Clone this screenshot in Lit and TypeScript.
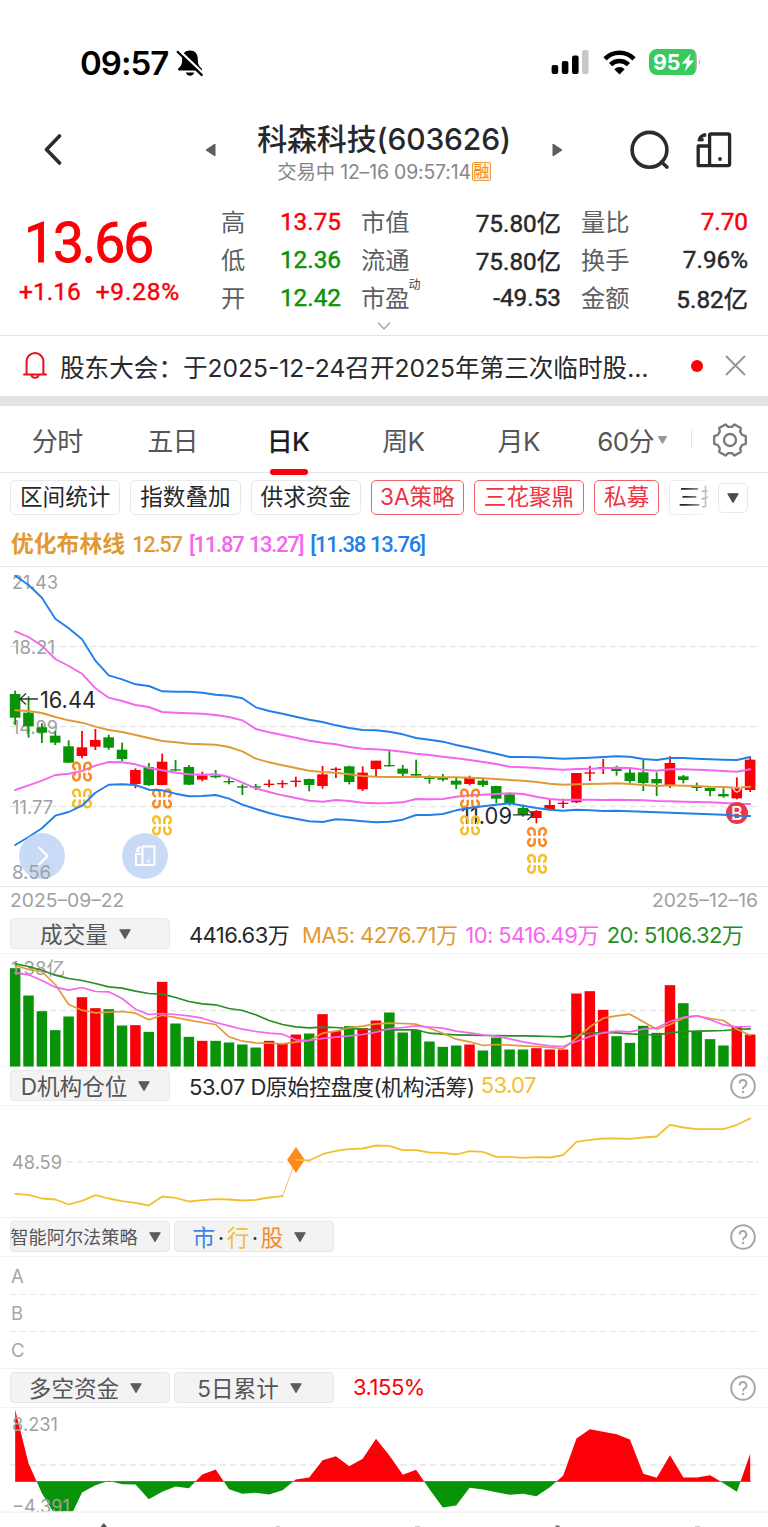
import { LitElement, html, svg, css } from "lit";
import { customElement } from "lit/decorators.js";

const X0 = 15.2;
const STEP = 13.364;
const x = (i: number) => X0 + i * STEP;

const RED = "#fb0007";
const GREEN = "#089308";

// Series are stored in thirds of a pixel, each pane with its own origin.
const third = (origin: number) => (v: number) => origin + v / 3;
const a = third(560);
const b = third(680);
const c = third(730);

const join = (p: number[], q: number[], r: number[]) => [...p.map(a), ...q.map(b), ...r.map(c)];

const upper2 = join(
  [47, 75, 113, 176, 205, 238, 302, 346, 358, 373, 378, 394, 395, 395, 398, 404, 407, 415, 442],
  [93, 101, 110, 119, 126, 136, 144, 150, 151, 155, 163, 174, 179, 185, 195, 203, 212, 221, 231],
  [81, 82, 84, 86, 85, 83, 81, 79, 80, 87, 90, 84, 84, 86, 88, 89, 90, 81]);
const upper1 = join(
  [214, 231, 257, 297, 318, 341, 385, 413, 423, 435, 441, 456, 458, 460, 461, 465, 471, 481, 507],
  [157, 165, 173, 182, 188, 193, 201, 206, 208, 211, 215, 221, 225, 230, 235, 240, 246, 252, 260],
  [112, 114, 117, 119, 117, 116, 115, 113, 114, 119, 122, 118, 118, 119, 121, 123, 125, 118]);
const middle = join(
  [451, 453, 459, 471, 481, 488, 500, 510, 516, 525, 534, 543, 547, 551, 553, 554, 561, 574, 596],
  [247, 256, 264, 272, 276, 278, 283, 288, 290, 291, 291, 290, 291, 292, 292, 293, 295, 297, 300],
  [152, 156, 161, 164, 163, 162, 161, 160, 162, 165, 168, 166, 167, 168, 170, 171, 173, 170]);
const lower1 = join(
  [690, 676, 662, 645, 641, 633, 617, 606, 607, 613, 624, 631, 638, 643, 644, 643, 651, 668, 685],
  [336, 346, 354, 362, 365, 360, 363, 368, 370, 369, 367, 357, 358, 357, 350, 346, 344, 342, 340],
  [192, 200, 207, 210, 209, 209, 210, 209, 210, 211, 213, 214, 215, 216, 217, 219, 221, 222]);
const lower2 = join(
  [855, 831, 805, 767, 756, 737, 698, 674, 673, 675, 689, 691, 701, 709, 708, 705, 716, 734, 747],
  [399, 409, 416, 424, 426, 418, 420, 424, 427, 425, 419, 405, 405, 402, 391, 384, 379, 374, 370],
  [227, 234, 239, 242, 239, 241, 243, 242, 244, 245, 247, 248, 250, 251, 253, 254, 257, 258]);

// [rising, high, body top, body bottom, low]
type Candle = [number, number, number, number, number];
const shift = (f: (v: number) => number) => (k: number[]): Candle => [k[0], f(k[1]), f(k[2]), f(k[3]), f(k[4])];
const candles: Candle[] = [
  ...[
    [0, 392, 402, 473, 495], [0, 409, 458, 499, 533], [0, 490, 502, 518, 549], [0, 513, 527, 548, 555],
    [0, 541, 559, 608, 609], [1, 513, 562, 588, 595], [1, 507, 540, 560, 570], [0, 524, 532, 563, 569],
    [0, 548, 569, 597, 603], [1, 625, 630, 672, 685], [0, 609, 621, 675, 678], [1, 581, 605, 675, 676],
    [0, 600, 628, 632, 634], [0, 615, 621, 674, 675], [1, 635, 646, 659, 664], [0, 630, 647, 652, 655],
    [0, 655, 663, 667, 673], [0, 673, 679, 683, 705], [0, 672, 679, 683, 690],
  ].map(shift(a)),
  ...[
    [1, 299, 311, 315, 322], [1, 301, 309, 313, 324], [1, 290, 302, 306, 321], [0, 296, 297, 315, 334],
    [1, 258, 283, 318, 326], [1, 262, 266, 270, 294], [0, 257, 259, 306, 313], [1, 259, 278, 328, 333],
    [1, 242, 242, 267, 288], [0, 213, 255, 259, 260], [0, 255, 266, 281, 293], [0, 239, 282, 287, 295],
    [0, 286, 292, 297, 311], [0, 282, 294, 299, 304], [0, 292, 302, 314, 327], [1, 287, 294, 312, 316],
    [0, 293, 302, 315, 321], [0, 317, 318, 356, 370], [0, 340, 343, 369, 377],
  ].map(shift(b)),
  ...[
    [0, 224, 234, 255, 260], [1, 240, 243, 264, 280], [1, 208, 225, 240, 243], [1, 206, 218, 222, 234],
    [1, 129, 129, 217, 219], [1, 108, 127, 131, 153], [1, 87, 111, 115, 132], [0, 107, 116, 123, 137],
    [0, 117, 128, 153, 158], [0, 90, 127, 159, 183], [0, 127, 147, 160, 198], [1, 79, 99, 166, 174],
    [0, 135, 139, 150, 160], [0, 158, 170, 174, 183], [0, 173, 174, 183, 199], [0, 175, 192, 199, 203],
    [1, 142, 174, 205, 208], [1, 81, 89, 180, 186],
  ].map(shift(c)),
];

const v = third(885);
const volume = [
  248, 330, 377, 434, 393, 335, 368, 371, 420, 419, 439, 289, 414, 454, 466, 466, 471, 477, 486, 466, 475, 447, 444,
  386, 437, 422, 428, 405, 381, 441, 434, 468, 484, 480, 477, 495, 456, 492, 492, 488, 492, 492, 324, 317, 373, 452,
  472, 421, 442, 299, 353, 437, 461, 480, 424, 447].map(v);
const ma20 = [
  235, 243, 254, 269, 279, 285, 294, 304, 308, 317, 324, 326, 336, 348, 355, 358, 369, 375, 388, 405, 417, 424, 427,
  425, 426, 429, 431, 433, 434, 433, 433, 443, 446, 448, 449, 450, 450, 451, 451, 452, 453, 454, 448, 443, 441, 442,
  445, 447, 448, 442, 438, 437, 436, 435, 432, 430].map(v);
const ma5 = [
  240, 252, 258, 297, 357, 374, 382, 380, 378, 383, 403, 389, 396, 404, 411, 417, 454, 467, 472, 473, 475, 470, 465,
  443, 437, 427, 422, 415, 413, 414, 416, 428, 443, 461, 469, 480, 477, 479, 481, 483, 486, 489, 458, 424, 398, 391,
  386, 409, 431, 417, 398, 391, 399, 405, 431, 449].map(v);
const ma10 = [
  262, 268, 285, 305, 314, 306, 318, 319, 339, 371, 387, 384, 387, 391, 398, 411, 421, 431, 438, 443, 446, 463, 465,
  459, 455, 451, 447, 440, 430, 426, 421, 425, 428, 437, 442, 448, 452, 460, 469, 476, 481, 483, 468, 453, 442, 437,
  439, 431, 427, 408, 395, 391, 403, 418, 424, 423].map(v);

const control = [
  280, 283, 294, 297, 312, 301, 284, 294, 302, 307, 315, 288, 292, 303, 299, 296, 297, 300, 298, 291, 287, 178, 180,
  161, 151, 146, 144, 135, 136, 149, 149, 156, 157, 162, 152, 154, 169, 169, 172, 170, 171, 164, 124, 118, 114, 114,
  115, 111, 108, 73, 81, 86, 86, 86, 73, 54].map(third(1100));

const funds = [
  118, 279, 368, 434, 450, 366, 344, 331, 341, 342, 386, 364, 348, 353, 312, 297, 356, 370, 367, 372, 359, 327, 321,
  269, 257, 287, 265, 205, 255, 313, 298, 356, 411, 405, 352, 357, 365, 373, 370, 377, 350, 316, 204, 176, 184, 191,
  207, 310, 322, 254, 321, 321, 314, 338, 364, 250].map(third(1370));

const points = (ys: number[], from = 0) => ys.map((y, i) => `${x(i + from).toFixed(1)},${y.toFixed(1)}`).join(" ");
const line = (ys: number[], color: string, from = 0, w = 1.9) =>
  svg`<polyline points=${points(ys, from)} fill="none" stroke=${color} stroke-width=${w} stroke-linejoin="round" stroke-linecap="round"/>`;
const dash = (y: number, x1 = 10) =>
  svg`<line x1=${x1} x2="758" y1=${y} y2=${y} stroke="#e6e6e6" stroke-width="1.3" stroke-dasharray="6 4"/>`;

// Each quarter is a hooked loop: the right-hand pair opens outward, the left-hand pair mirrors it.
const clover = (cx: number, cy: number, color: string) => svg`
  <g transform="translate(${cx} ${cy})" fill="none" stroke=${color} stroke-width="2.5">
    ${[[1, 1], [-1, 1], [1, -1], [-1, -1]].map(([sx, sy]) => svg`
      <path transform="scale(${sx} ${sy})" d="M2.300 1.200V5.300A3.300 3.500 0 1 0 6 1.900"/>`)}
  </g>`;

const deviceIcon = (cls: string) => html`
  <svg class=${cls} viewBox="0 0 36 36" fill="none" stroke="currentColor" stroke-width="3.300" stroke-linejoin="round">
    <rect x="13.6" y="2" width="20" height="31.6" rx="1.5"/>
    <path d="M13.6 14H2.2v19.6h11.4"/>
    <path d="M9.800 1.500C4.800 1.800 2.200 4.800 2 9h5.200V6.400H5.600C6.200 5 7.600 4.300 9.800 4.400Z" fill="currentColor" stroke-width=".8"/>
    <circle cx="24" cy="27" r="1.900" fill="currentColor" stroke="none"/>
  </svg>`;

const help = html`
  <svg class="help" viewBox="0 0 26 26" fill="none" stroke="#a6a6aa" stroke-width="2">
    <circle cx="13" cy="13" r="11.8"/>
    <path d="M9.6 10.4a3.4 3.4 0 1 1 5 3c-1.200.6-1.600 1.200-1.600 2.800" stroke-width="1.9"/>
    <circle cx="13" cy="19" r="1.2" fill="#a6a6aa" stroke="none"/>
  </svg>`;

@customElement("app-root")
export class AppRoot extends LitElement {
  static styles = css`
    :host { display: block; width: 768px; height: 1527px; overflow: hidden; background: #fff; color: #27282b;
      font-family: Inter, "Noto Sans CJK SC", sans-serif; white-space: nowrap; }
    * { box-sizing: border-box; }
    svg { display: block; flex: none; }
    .status { height: 100px; display: flex; align-items: center; padding: 25px 66px 0 80px; color: #000; }
    .clock { font-size: 33px; font-weight: 600; letter-spacing: -1px; width: 96px; }
    .grow { flex: 1; }
    .sys { display: flex; align-items: center; gap: 13.500px; }
    .nav { height: 100px; display: grid; grid-template-columns: 200px 20px 328px 20px 200px; align-items: center; }
    .back { padding-left: 43px; }
    .tri-l, .tri-r { justify-self: center; }
    .name { text-align: center; padding-top: 5px; }
    .stock { font-size: 30px; font-weight: 500; line-height: 38px; letter-spacing: -.15px; }
    .when { display: flex; justify-content: center; align-items: center; font-size: 19.400px; line-height: 28px; color: #85868a; letter-spacing: -.15px; }
    .rong { width: 19px; height: 19px; border: 1px solid #f49a3a; border-radius: 2px; background: #fef0df; color: #ee8a22;
      font-size: 16px; line-height: 16px; text-align: center; margin-left: 1px; letter-spacing: 0; }
    .tools { display: flex; align-items: center; gap: 26px; padding-left: 62px; }
    .dev { width: 36px; height: 36px; }
    .quote { height: 135.500px; display: flex; border-bottom: 1px solid #e6e6e8; font-family: Roboto, "Noto Sans CJK SC", sans-serif; }
    .last { width: 221px; color: #fb0007; }
    .price { font-size: 55px; line-height: 60px; -webkit-text-stroke: .9px currentColor; padding: 13px 0 0 24px; letter-spacing: -2px; }
    .chg { display: flex; gap: 15px; font-size: 24.500px; line-height: 30px; -webkit-text-stroke: .45px currentColor; padding: 4px 0 0 19px; }
    .pct { letter-spacing: .8px; }
    .mid { width: 527px; }
    .stats { display: grid; grid-template-columns: 120px 200px 167px; column-gap: 20px; grid-auto-rows: 38px; padding-top: 2px; }
    .cell { display: flex; justify-content: space-between; align-items: center; font-size: 24.300px; height: 37px; }
    .num { -webkit-text-stroke: .45px currentColor; padding-top: 1px; margin-bottom: -1px; }
    .lab { color: #5e5f63; font-size: 24.300px; margin-top: -1px; }
    sup { font-size: 12px; line-height: 12px; position: relative; top: -8px; left: -1px; color: #444; }
    .up { color: #fb0007; }
    .down { color: #089308; }
    .expand { margin: 5px 0 0 155px; }
    .notice { height: 60.500px; display: flex; align-items: center; padding-left: 23px; }
    .ntext { margin-left: 13px; width: 631px; font-size: 24.600px; }
    .dot { width: 12px; height: 12px; border-radius: 50%; background: #fb0007; }
    .close { margin-left: 22px; }
    .band { height: 9.500px; background: #e4e4e6; }
    .tabs { height: 67px; display: flex; border-bottom: 1px solid #e6e6e8; font-size: 26px; color: #55565a; }
    .tab { width: 115.4px; display: flex; align-items: center; justify-content: center; gap: 3px; padding: 2px 1px 0 0; position: relative; letter-spacing: -.6px; }
    .tab:nth-child(6) { padding-right: 4px; }
    .tab.on { color: #1d1e20; font-weight: 500; }
    .tab.on::after { content: ""; position: absolute; left: 39px; bottom: -3px; width: 38px; height: 6px; border-radius: 3px; background: #f5000f; }
    .gear { display: flex; align-items: center; margin-left: -1px; }
    .rule { width: 1px; height: 20px; background: #e6e6e8; margin-right: 20px; }
    .gear svg { margin-top: 2px; }
    .chips { height: 50px; display: flex; align-items: center; gap: 10px; padding: 0 0 0 10px; font-size: 22.600px; }
    .chip { flex: none; height: 35px; line-height: 32px; width: 110.3px; border: 1.4px solid #e9e9eb; border-radius: 5px; text-align: center; }
    .chip.hot { color: #ee3342; border-color: #f0616c; }
    .chip.w3a { width: 93px; }
    .chip.w2 { width: 65px; }
    .chip.cut { width: 39px; overflow: hidden; text-align: left; padding-left: 8px; border-right: 0; border-radius: 5px 0 0 5px;
      -webkit-mask-image: linear-gradient(90deg, #000 40%, transparent 115%); mask-image: linear-gradient(90deg, #000 40%, transparent 115%); }
    .more { height: 30px; width: 30px; border: 1.4px solid #e9e9eb; border-radius: 5px; display: grid; place-items: center; }
    .boll { height: 44.500px; display: flex; gap: 7px; padding-left: 11px; line-height: 43px; font-family: Roboto, "Noto Sans CJK SC", sans-serif;
      font-size: 22px; font-weight: 500; color: #e09a35; border-bottom: 1px solid #e9e9eb; letter-spacing: -1.250px; word-spacing: 1px; }
    .boll b { font-weight: 700; letter-spacing: 0; font-size: 22.800px; }
    .pink { color: #f566f0; }
    .blue { color: #1f80e8; }
    .green { color: #258f25; }
    .orange { color: #e09a35; }
    .gold { color: #f3bf2f; }
    .amber { color: #f5892a; }
    .sky { color: #3f7ff0; }
    .dates { height: 32px; display: flex; justify-content: space-between; padding: 1px 10px 0 10px; font-size: 19.300px; line-height: 25px; color: #a0a0a3; border-top: 1px solid #e9e9eb; }
    .bar { display: flex; align-items: center; height: 38.500px; padding: 0 12px 0 10px; border-bottom: 1.500px solid #f2f2f3; font-size: 22px; }
    .bar.first { height: 35.500px; padding-bottom: 3px; }
    .pick { flex: none; width: 160px; height: 31px; display: flex; align-items: center; justify-content: center; gap: 11px; background: #f3f3f4; border: 1px solid #e7e7e9;
      border-radius: 4px; color: #55565a; font-size: 22.600px; padding: 0 9px 1px 0; margin-right: 4px; }
    .pick.small { font-size: 18.200px; padding-right: 9px; }
    .pick svg { margin-top: 1px; }
    .sep { margin: 0 2.500px; color: #333; }
    .vals { margin: -1px 0 0 15px; letter-spacing: -.6px; }
    .vals.wide { letter-spacing: -.48px; }
    .vals + .vals { margin-left: 8px; }
    .vals + .vals.far { margin-left: 13px; }
    .vals.wide + .vals { margin-left: 6px; }
    .help { width: 26px; height: 26px; }
    .abc { height: 112.500px; display: grid; grid-template-rows: 1fr 1fr 1fr; padding: 0 10px; color: #a6a6a9; font-size: 18.500px; border-bottom: 1.500px solid #f2f2f3; }
    .abc div { display: flex; align-items: center; padding: 1px 0 0 1px; }
    .abc div + div { background: repeating-linear-gradient(90deg, #e6e6e6 0 6px, transparent 6px 10px) top / 100% 1px no-repeat; }
    text { font-family: Inter, "Noto Sans CJK SC", sans-serif; }
    .axis { font-size: 18.600px; fill: #a0a0a3; }
    .mark { font-size: 22.500px; fill: #27282b; }
  `;

  private arrow(color = "#5b5c60", w = 12, h = 10) {
    return html`<svg width=${w} height=${h} viewBox="0 0 11 9"><path d="M.8.6h9.400L5.500 8.600Z" fill=${color} stroke=${color} stroke-linejoin="round"/></svg>`;
  }

  private axis(text: string, y: number, w: number) {
    return svg`<text class="axis" x="12" y=${y} textLength=${w} lengthAdjust="spacingAndGlyphs">${text}</text>`;
  }

  private stat(name: string, value: string, tone = "", note = "") {
    return html`<div class="cell"><span class="lab">${name}${note ? html`<sup>${note}</sup>` : ""}</span><span class="num ${tone}">${value}</span></div>`;
  }

  private pricePane() {
    return html`<svg width="768" height="319" viewBox="0 567 768 319">
      ${dash(646.500)}${dash(726.500)}${dash(806.500)}
      ${this.axis("21.43", 588.500, 46)}${this.axis("18.21", 653.500, 43)}${this.axis("14.99", 733.500, 46)}${this.axis("11.77", 813.500, 41)}
      ${candles.map(([up, hi, top, bot, lo], i) => svg`
        <path d="M${x(i)} ${hi}V${lo}" stroke=${up ? RED : GREEN} stroke-width="1.800"/>
        <rect x=${x(i) - 5.400} y=${top} width="10.600" height=${Math.max(bot - top, 1.300)} fill=${up ? RED : GREEN}/>`)}
      ${line(upper2, "#1f80e8")}${line(upper1, "#f566f0")}${line(middle, "#e09a35")}${line(lower1, "#f566f0")}
      <path d="M20 699H38M26 693.500L20 699L26 704.500" fill="none" stroke="#333" stroke-width="1.300"/>
      <text class="mark" x="40" y="707.500" textLength="56" lengthAdjust="spacingAndGlyphs">16.44</text>
      <text class="mark" x="461" y="823.500" textLength="51" lengthAdjust="spacingAndGlyphs">11.09</text>
      <path d="M513 814.800H532M527.500 809.500L533 814.800L527.500 820" fill="none" stroke="#333" stroke-width="1.300"/>
      ${[[82, 771.500], [162, 798.500], [470, 798.500], [537, 837]].map(([cx, cy]) => svg`
        ${clover(cx, cy, "#f58a26")}${clover(cx, cy + 26.800, "#f3bf2f")}`)}
      <circle cx="737" cy="813" r="11" fill="#e9384a"/>
      <text x="737" y="819.500" text-anchor="middle" font-size="18" font-weight="500" fill="#fff">B</text>
      <path d="M734.500 786a3.400 3.400 0 1 0 5 0" fill="none" stroke="#fbd5d5" stroke-width="1.400"/>
      ${line(lower2, "#1f80e8")}
      <circle cx="42" cy="856" r="23" fill="#bfd3f6" fill-opacity=".85"/>
      <path d="M38.500 847l9 9-9 9" fill="none" stroke="#fff" stroke-width="2.300"/>
      <circle cx="145" cy="856" r="23" fill="#bfd3f6" fill-opacity=".85"/>
      <g fill="none" stroke="#fff" stroke-width="2" stroke-linejoin="round">
        <rect x="142.500" y="846.500" width="12" height="18.500"/>
        <path d="M142.500 854h-6.500v11h6.500M141 847.500c-2.500 0-4 1.500-4 3.500h2.500"/>
        <circle cx="148.500" cy="861.500" r=".4"/>
      </g>
      ${this.axis("8.56", 878.500, 39)}
    </svg>`;
  }

  private volumePane() {
    return html`<svg width="768" height="113.500" viewBox="0 953.500 768 113.500">
      ${dash(1010)}
      ${volume.map((y, i) => svg`<rect x=${x(i) - 5.300} y=${y} width="10.500" height=${1066.500 - y} fill=${candles[i][0] ? RED : GREEN}/>`)}
      <line x1="0" x2="768" y1="1066.500" y2="1066.500" stroke="#ececee"/>
      <text class="axis" x="11" y="974.500" textLength="54" lengthAdjust="spacingAndGlyphs">1.38亿</text>
      ${line(ma20, "#258f25", 0, 1.700)}${line(ma5, "#e09a35", 0, 1.700)}${line(ma10, "#f566f0", 0, 1.700)}
    </svg>`;
  }

  private controlPane() {
    return html`<svg width="768" height="112.500" viewBox="0 1105.500 768 112.500">
      ${dash(1161.500, 67)}
      ${this.axis("48.59", 1168.500, 50)}
      ${line(control.slice(0, 21), "#f3bf2f", 0, 1.800)}
      <path d="M${x(20)} ${control[20]}L${x(21)} ${control[21]}" stroke="#f5a65a" stroke-width=".8"/>
      <path d="M296 1146.500L304.800 1159.300L296 1172.500L287.200 1159.300Z" fill="#ff8a1c"/>
      ${line(control.slice(21), "#f3bf2f", 21, 1.800)}
      <line x1="0" x2="768" y1="1217.300" y2="1217.300" stroke="#efeff0" stroke-width="1.500"/>
    </svg>`;
  }

  private fundsPane() {
    const area = `M${X0} 1481L${points(funds).replace(/ /g, "L")}L${x(55)} 1481Z`;
    return html`<svg width="768" height="119.500" viewBox="0 1407.500 768 119.500">
      <defs>
        <clipPath id="pos"><rect x="0" y="1400" width="768" height="81.300"/></clipPath>
        <clipPath id="neg"><rect x="0" y="1481" width="768" height="30"/></clipPath>
      </defs>
      ${dash(1464.500)}
      <path d=${area} fill=${RED} clip-path="url(#pos)"/>
      <path d=${area} fill=${GREEN} clip-path="url(#neg)"/>
      <line x1="15" x2="751" y1="1481" y2="1481" stroke="#a8430a" stroke-width=".7"/>
      ${this.axis("8.231", 1430, 46)}${this.axis("−4.391", 1512.500, 58)}
      <rect x="0" y="1511.200" width="768" height="16" fill="#fff"/>
      <line x1="0" x2="768" y1="1511.500" y2="1511.500" stroke="#ececee"/>
      <path d="M103.800 1522.500L107.500 1527H100Z" fill="#55565a"/>
      <path d="M276 1526.300h4M415 1526.300h5M695 1526.300h5" stroke="#bbb"/>
      <path d="M555.500 1526h4" stroke="#666" stroke-width="2"/>
    </svg>`;
  }

  render() {
    return html`
      <div class="status">
        <span class="clock">09:57</span>
        <svg width="28" height="28" viewBox="0 0 28 28">
          <path d="M14 1.500c-5 0-7.800 3.500-7.800 8.200 0 6-1.200 7.300-3.700 9.500-1 1-.5 2.300.8 2.300h21.400c1.300 0 1.800-1.300.8-2.300-2.500-2.200-3.700-3.500-3.700-9.500C21.800 5 19 1.500 14 1.500ZM9.800 23.500a4.300 4 0 0 0 8.400 0Z" fill="#000"/>
          <path d="M2.600.8L28 25.200" stroke="#fff" stroke-width="2.400"/>
          <path d="M1 2.200L26.400 26.600" stroke="#000" stroke-width="2.200"/>
        </svg>
        <span class="grow"></span>
        <div class="sys">
          <svg width="38" height="25" viewBox="0 0 38 25">
            <rect x=".6" y="15" width="6.600" height="9" rx="2"/><rect x="10.800" y="11" width="6.600" height="13" rx="2"/>
            <rect x="21" y="5.500" width="6.600" height="18.500" rx="2"/><rect x="31" y="0" width="6.600" height="24" rx="2" fill="#c9c9c9"/>
          </svg>
          <svg width="33" height="25" viewBox="0 0 33 25" fill="none" stroke="#000" stroke-width="4.600">
            <path d="M2 8.800a20.500 20.500 0 0 1 29 0"/>
            <path d="M7.600 14.700a12.500 12.500 0 0 1 17.800 0"/>
            <path d="M11.300 19.200a7.300 7.300 0 0 1 10.400 0L16.500 24.500Z" fill="#000" stroke="none"/>
          </svg>
          <svg width="53" height="27" viewBox="0 0 53 27">
            <path d="M40 0a8 8 0 0 1 8 8v10a8 8 0 0 1-8 8Z" fill="#b5b5b7"/>
            <path d="M8 0h34a5 5 0 0 1 4.500 5v17a5 5 0 0 1-4.500 4H8a8 8 0 0 1-8-8V8a8 8 0 0 1 8-8Z" fill="#36cb5c"/>
            <path d="M49.800 9.500q2.400 3.500 0 7Z" fill="#b5b5b7"/>
            <text x="4" y="21" font-size="21.500" font-weight="700" fill="#fff" textLength="27.500" lengthAdjust="spacingAndGlyphs">95</text>
            <path d="M41.800 4.500L32.800 14.600h5.200L35.600 22.500L45.200 11.600h-5.400Z" fill="#fff"/>
          </svg>
        </div>
      </div>

      <div class="nav">
        <div class="back"><svg width="20" height="32" viewBox="0 0 20 32" fill="none" stroke="#2b2c2f" stroke-width="3.600" stroke-linecap="round" stroke-linejoin="round"><path d="M16.500 2L3.500 15.500L16.500 29"/></svg></div>
        <svg class="tri-l" width="12" height="14" viewBox="0 0 12 14"><path d="M11 1v12L2 7Z" fill="#5e5f63" stroke="#5e5f63" stroke-linejoin="round"/></svg>
        <div class="name">
          <div class="stock">科森科技(603626)</div>
          <div class="when">交易中 12–16 09:57:14<span class="rong">融</span></div>
        </div>
        <svg class="tri-r" width="12" height="14" viewBox="0 0 12 14"><path d="M1 1v12L10 7Z" fill="#5e5f63" stroke="#5e5f63" stroke-linejoin="round"/></svg>
        <div class="tools">
          <svg width="40" height="40" viewBox="0 0 40 40" fill="none" stroke="#2b2c2f" stroke-width="3.600" stroke-linecap="round"><circle cx="19.500" cy="19.800" r="17.400"/><path d="M31.500 32l5.400 5"/></svg>
          ${deviceIcon("dev")}
        </div>
      </div>

      <div class="quote">
        <div class="last">
          <div class="price">13.66</div>
          <div class="chg"><span>+1.16</span><span class="pct">+9.28%</span></div>
        </div>
        <div class="mid">
          <div class="stats">
            ${this.stat("高", "13.75", "up")}${this.stat("市值", "75.80亿")}${this.stat("量比", "7.70", "up")}
            ${this.stat("低", "12.36", "down")}${this.stat("流通", "75.80亿")}${this.stat("换手", "7.96%")}
            ${this.stat("开", "12.42", "down")}${this.stat("市盈", "-49.53", "", "动")}${this.stat("金额", "5.82亿")}
          </div>
          <svg class="expand" width="16" height="10" viewBox="0 0 16 10" fill="none" stroke="#a6a6aa" stroke-width="1.500"><path d="M2 1.500L8 8L14 1.500"/></svg>
        </div>
      </div>

      <div class="notice">
        <svg width="24" height="29" viewBox="0 0 24 29" fill="none" stroke="#e8101a" stroke-width="2" stroke-linecap="round" stroke-linejoin="round">
          <path d="M3.600 22.500V10.500a8.400 8.400 0 0 1 16.800 0v12M1 23.500h22M8.500 24.500a3.600 3 0 0 0 7 0"/>
        </svg>
        <span class="ntext">股东大会：于2025-12-24召开2025年第三次临时股…</span>
        <span class="dot"></span>
        <svg class="close" width="21" height="21" viewBox="0 0 21 21" stroke="#98989b" stroke-width="2"><path d="M1 1l19 19M20 1L1 20"/></svg>
      </div>
      <div class="band"></div>

      <div class="tabs">
        <div class="tab">分时</div><div class="tab">五日</div><div class="tab on">日K</div>
        <div class="tab">周K</div><div class="tab">月K</div><div class="tab">60分${this.arrow("#98989b", 11, 8)}</div>
        <div class="gear">
          <span class="rule"></span>
          <svg width="36" height="36" viewBox="-18 -18 36 36" fill="none" stroke="#77787b" stroke-width="2.300" stroke-linejoin="round">
            <path d="M-4.500-15.500L-1.800-13.200H1.800L4.500-15.500L10.800-11.900L10.200-8.300L12.200-5L15.800-3.800V3.800L12.200 5L10.200 8.300L10.800 11.900L4.500 15.500L1.800 13.200H-1.800L-4.500 15.500L-10.800 11.900L-10.200 8.300L-12.200 5L-15.800 3.800V-3.800L-12.200-5L-10.200-8.300L-10.800-11.900Z"/>
            <circle r="6"/>
          </svg>
        </div>
      </div>

      <div class="chips">
        <span class="chip">区间统计</span><span class="chip">指数叠加</span><span class="chip">供求资金</span>
        <span class="chip hot w3a">3A策略</span><span class="chip hot">三花聚鼎</span><span class="chip hot w2">私募</span>
        <span class="chip cut">三择</span><span class="more">${this.arrow("#4a4b57")}</span>
      </div>
      <div class="boll"><b>优化布林线</b><span>12.57</span><span class="pink">[11.87 13.27]</span><span class="blue">[11.38 13.76]</span></div>

      ${this.pricePane()}
      <div class="dates"><span>2025–09–22</span><span>2025–12–16</span></div>

      <div class="bar first">
        <div class="pick">成交量 ${this.arrow()}</div>
        <div class="vals">4416.63万</div><div class="vals far orange">MA5: 4276.71万</div>
        <div class="vals pink">10: 5416.49万</div><div class="vals green">20: 5106.32万</div>
      </div>
      ${this.volumePane()}

      <div class="bar">
        <div class="pick">D机构仓位 ${this.arrow()}</div>
        <div class="vals wide">53.07 D原始控盘度(机构活筹)</div><div class="vals gold">53.07</div>
        <span class="grow"></span>${help}
      </div>
      ${this.controlPane()}

      <div class="bar">
        <div class="pick small">智能阿尔法策略 ${this.arrow()}</div>
        <div class="pick"><span><span class="sky">市</span><span class="sep">·</span><span class="gold">行</span><span class="sep">·</span><span class="amber">股</span></span>${this.arrow()}</div>
        <span class="grow"></span>${help}
      </div>
      <div class="abc"><div>A</div><div>B</div><div>C</div></div>

      <div class="bar">
        <div class="pick">多空资金 ${this.arrow()}</div>
        <div class="pick">5日累计 ${this.arrow()}</div>
        <div class="vals wide up">3.155%</div>
        <span class="grow"></span>${help}
      </div>
      ${this.fundsPane()}
    `;
  }
}
